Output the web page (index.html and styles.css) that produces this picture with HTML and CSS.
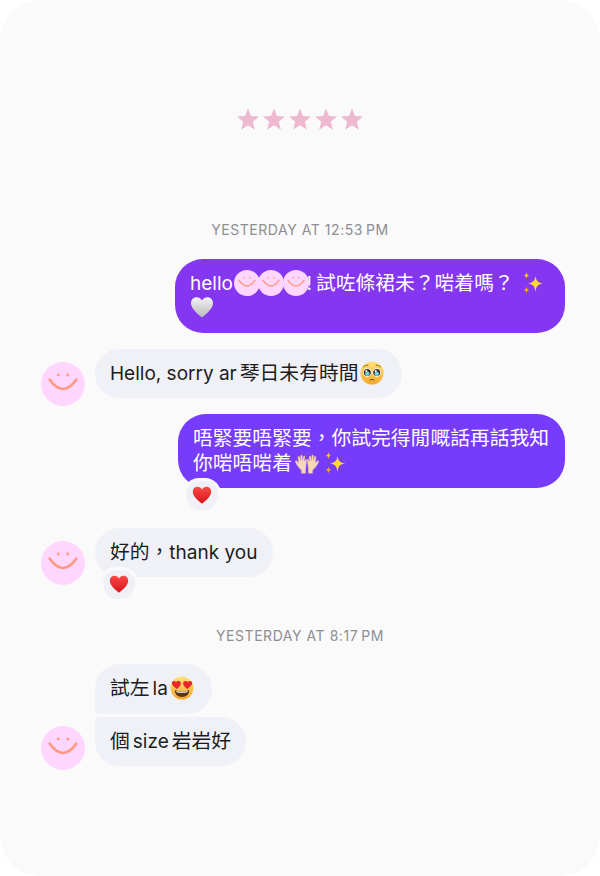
FILE: index.html
```html
<!DOCTYPE html>
<html lang="zh-Hant">
<head>
<meta charset="utf-8">
<title>Chat</title>
<link rel="stylesheet" href="styles.css">
</head>
<body>
<svg class="defs" width="0" height="0" aria-hidden="true">
  <defs>
    <linearGradient id="gw" x1="0" y1="0" x2="0" y2="1"><stop offset="0" stop-color="#f4f4f4"/><stop offset="1" stop-color="#b9b9b9"/></linearGradient>
    <linearGradient id="gr" x1="0" y1="0" x2="0" y2="1"><stop offset="0" stop-color="#fb4a45"/><stop offset="1" stop-color="#d4141c"/></linearGradient>
    <linearGradient id="gy" x1="0" y1="0" x2="0" y2="1"><stop offset="0" stop-color="#fde27a"/><stop offset="1" stop-color="#f5a92c"/></linearGradient>
    <symbol id="smile" viewBox="0 0 44 44">
      <circle cx="22" cy="22" r="22" fill="#ffd6ff"/>
      <circle cx="17.3" cy="13" r="1.4" fill="#ff9a7e"/>
      <circle cx="26.7" cy="13" r="1.4" fill="#ff9a7e"/>
      <path d="M8.6 17.6Q22 36.5 35.4 17.6" fill="none" stroke="#ff9a7e" stroke-width="2.6" stroke-linecap="round"/>
    </symbol>
    <symbol id="star" viewBox="0 0 24 24">
      <path d="M12 1.500l3 7.600 7.900.5-6.100 5.100 2 8-6.800-4.400-6.800 4.400 2-8-6.100-5.100 7.900-.5z" fill="#edb8d0"/>
    </symbol>
    <symbol id="spark" viewBox="0 0 24 24">
      <path d="M14.500 5C15.400 10.200 16.800 11.600 22.500 12.500 16.800 13.400 15.400 14.800 14.500 21 13.600 14.800 12.200 13.400 6.500 12.500 12.200 11.600 13.600 10.200 14.500 5Z" fill="#fdd835"/>
      <path d="M5.500 1C5.900 3.600 6.400 4.100 8.700 4.500 6.400 4.900 5.900 5.400 5.500 8 5.100 5.400 4.600 4.900 2.300 4.500 4.600 4.100 5.100 3.600 5.500 1Z" fill="#fbc02d"/>
      <path d="M5.500 15.500C5.900 18 6.400 18.500 8.700 18.900 6.400 19.300 5.900 19.800 5.500 22.500 5.100 19.800 4.600 19.300 2.300 18.900 4.600 18.500 5.100 18 5.500 15.500Z" fill="#f9a825"/>
    </symbol>
    <symbol id="heart" viewBox="0 0 24 24">
      <path d="M12 22.500C5 16.800 1 12.700 1 8 1 4.600 3.500 2.200 6.600 2.200 8.900 2.200 10.900 3.400 12 5.600 13.100 3.400 15.100 2.200 17.400 2.200 20.500 2.200 23 4.600 23 8 23 12.700 19 16.800 12 22.500Z"/>
    </symbol>
    <symbol id="plead" viewBox="0 0 24 24">
      <circle cx="12" cy="12" r="11.500" fill="url(#gy)"/>
      <circle cx="7.300" cy="11.500" r="4.300" fill="#fff"/><circle cx="16.700" cy="11.500" r="4.300" fill="#fff"/>
      <circle cx="7.300" cy="11.500" r="3.500" fill="#3b2a20"/><circle cx="16.700" cy="11.500" r="3.500" fill="#3b2a20"/>
      <circle cx="7.300" cy="12.800" r="2.200" fill="#6fd0e8"/><circle cx="16.700" cy="12.800" r="2.200" fill="#6fd0e8"/>
      <circle cx="6.300" cy="10" r="1.100" fill="#fff"/><circle cx="15.700" cy="10" r="1.100" fill="#fff"/>
      <path d="M3.500 5.800Q5.500 3.800 8 4.100M20.500 5.800Q18.500 3.800 16 4.100" fill="none" stroke="#8a5a1e" stroke-width=".9" stroke-linecap="round"/>
      <path d="M9.800 19Q12 17.400 14.200 19" fill="none" stroke="#7a4a18" stroke-width="1" stroke-linecap="round"/>
    </symbol>
    <symbol id="hearteyes" viewBox="0 0 24 24">
      <circle cx="12" cy="12" r="11.500" fill="url(#gy)"/>
      <path d="M4.700 14.200Q12 16.200 19.300 14.200 19 20.800 12 20.900 5 20.800 4.700 14.200Z" fill="#5b3416"/>
      <path d="M6.300 14.900Q12 16.200 17.700 14.900L17.400 16.200Q12 17.300 6.600 16.200Z" fill="#fff"/>
      <path d="M6.700 13C3.700 10.800 1.600 9 1.900 6.800 2.200 5 4.500 4.400 6 6 7.700 4.500 10.400 4.800 10.900 6.900 11.300 9 9.300 11 6.700 13Z" fill="#e8262c"/>
      <path d="M17.300 13C20.300 10.800 22.400 9 22.100 6.800 21.800 5 19.500 4.400 18 6 16.300 4.500 13.600 4.800 13.100 6.900 12.700 9 14.700 11 17.300 13Z" fill="#e8262c"/>
    </symbol>
    <symbol id="hands" viewBox="0 0 30 24">
      <g fill="#f6d9bd" stroke="#e0b48e" stroke-width=".5">
        <path d="M9 23V19.500C6.500 18 4 14 2.500 11 2 9.800 3.500 9 4.300 10L6 12.300 5.400 5.600C5.300 4.500 6.900 4.300 7.100 5.400L8 9.800 8.200 4.300C8.200 3.200 9.900 3.200 9.900 4.300L10.100 9.800 11.200 5.100C11.500 4 13 4.400 12.800 5.500L12 10.500 13.600 8.300C14.300 7.600 15 8.300 14.700 9.300 14 12.500 13.800 16 13.500 19.500V23Z"/>
        <path d="M21 23V19.500C23.500 18 26 14 27.500 11 28 9.800 26.500 9 25.700 10L24 12.300 24.600 5.600C24.700 4.500 23.100 4.300 22.900 5.400L22 9.800 21.800 4.300C21.800 3.200 20.100 3.200 20.100 4.300L19.900 9.800 18.800 5.100C18.500 4 17 4.400 17.200 5.500L18 10.500 16.400 8.300C15.700 7.600 15 8.300 15.300 9.300 16 12.500 16.200 16 16.500 19.500V23Z"/>
      </g>
      <path d="M10 2.200V.600M13.500 2.500L14 1M17 2.500L16.500 1M20.500 2.200V.600" stroke="#8f7fb0" stroke-width=".8" fill="none"/>
    </symbol>
  </defs>
</svg>

<main class="card">
  <div class="stars">
    <svg class="star"><use href="#star"/></svg>
    <svg class="star"><use href="#star"/></svg>
    <svg class="star"><use href="#star"/></svg>
    <svg class="star"><use href="#star"/></svg>
    <svg class="star"><use href="#star"/></svg>
  </div>

  <p class="time time-first">YESTERDAY AT 12:53&#8201;PM</p>

  <div class="row out">
    <div class="bubble sent sent-a">hello<svg class="mini mini-first"><use href="#smile"/></svg><svg class="mini"><use href="#smile"/></svg><svg class="mini"><use href="#smile"/></svg><span class="bang">!</span><span class="zh zh-after-bang">試咗條裙未？啱着嗎？</span><svg class="emoji spark-a"><use href="#spark"/></svg><br><svg class="emoji heart-w"><use href="#heart"/></svg></div>
  </div>

  <div class="row in gap-a">
    <svg class="avatar"><use href="#smile"/></svg>
    <div class="bubble recv">Hello, sorry ar<span class="zh zh-tight">琴日未有時間</span><svg class="emoji plead"><use href="#plead"/></svg></div>
  </div>

  <div class="row out gap-a">
    <div class="holder">
      <div class="bubble sent sent-b"><span class="zh">唔緊要唔緊要，你試完得閒嘅話再話我知</span><br><span class="zh">你啱唔啱着</span><svg class="emoji hands"><use href="#hands"/></svg><svg class="emoji spark-b"><use href="#spark"/></svg></div>
      <div class="react react-out"><svg class="heart-r"><use href="#heart"/></svg></div>
    </div>
  </div>

  <div class="row in gap-b">
    <svg class="avatar"><use href="#smile"/></svg>
    <div class="holder">
      <div class="bubble recv thanks"><span class="zh">好的，</span>thank you</div>
      <div class="react react-in"><svg class="heart-r"><use href="#heart"/></svg></div>
    </div>
  </div>

  <p class="time time-second">YESTERDAY AT 8:17&#8201;PM</p>

  <div class="row in no-avatar">
    <div class="bubble recv top-of-group"><span class="zh">試左</span><span class="latin-gap">la</span><svg class="emoji eyes"><use href="#hearteyes"/></svg></div>
  </div>
  <div class="row in last-row">
    <svg class="avatar avatar-last"><use href="#smile"/></svg>
    <div class="bubble recv bottom-of-group"><span class="zh">個</span><span class="latin-gap">size</span><span class="zh zh-tight">岩岩好</span></div>
  </div>
</main>
</body>
</html>
```

FILE: styles.css
```css
* { box-sizing: border-box; }

html, body {
  margin: 0;
  height: 876px;
  overflow: hidden;
  background: #ffffff;
}

.defs { position: absolute; }

.card {
  height: 876px;
  padding: 107px 35px 0;
  background: #fafafa;
  border-radius: 40px;
  font-family: Inter, "Noto Sans CJK TC", sans-serif;
  font-size: 19px;
  line-height: 25px;
  color: #1c1c1e;
}

.stars {
  display: flex;
  justify-content: center;
  gap: 2px;
  height: 24px;
}

.star { width: 24px; height: 24px; }

.time {
  margin: 0;
  text-align: center;
  font-size: 14px;
  line-height: 20px;
  letter-spacing: .55px;
  color: #8e8e93;
}

.time-first { margin-top: 89px; margin-bottom: 19px; }
.time-second { margin-top: 49px; margin-bottom: 18px; }

.row { display: flex; align-items: flex-end; }
.out { justify-content: flex-end; }
.in { gap: 10px; padding-left: 6px; }
.no-avatar { padding-left: 60px; }

.gap-a { margin-top: 16px; }
.gap-b { margin-top: 40px; }
.last-row { margin-top: 3px; }

.avatar {
  flex: none;
  width: 44px;
  height: 44px;
  margin-bottom: -8px;
}

.avatar-last { margin-bottom: -4px; }

.holder { position: relative; }

.bubble {
  padding: 12px 15px;
  white-space: nowrap;
  border-radius: 25px;
}

.thanks { padding-right: 16px; }

.zh {
  font-family: "Noto Sans CJK TC", sans-serif;
  font-size: 19.8px;
  line-height: 20px;
  text-spacing-trim: space-all;
}

.zh-after-bang { margin-left: 4px; }
.zh-tight { margin-left: 3px; }
.latin-gap { margin-left: 3px; }

.sent { color: #ffffff; border-radius: 28px; }
.sent-a { background: #8536f1; width: 390px; }
.sent-b { background: #763bfb; width: 387px; }

.recv { background: #f0f1f6; }

.top-of-group { padding-bottom: 13px; border-bottom-left-radius: 4px; }
.bottom-of-group { border-top-left-radius: 4px; }

.emoji {
  width: 24px;
  height: 24px;
  margin-block: -6px;
  vertical-align: 1px;
}

.mini {
  position: relative;
  width: 26px;
  height: 26px;
  margin-block: -6px;
  margin-right: -1.500px;
  vertical-align: 0;
}

.mini-first { margin-left: 1px; }

.bang { margin-left: -1px; }

.spark-a { margin-left: 7px; }
.heart-w { fill: url(#gw); margin-left: 0; vertical-align: 2px; }
.hands { width: 28px; margin-left: 1px; }
.spark-b { margin-left: 2px; }
.plead { margin-left: 2px; margin-right: 3px; }
.eyes { margin-left: 2px; margin-right: 3px; }

.react {
  position: absolute;
  display: flex;
  align-items: center;
  justify-content: center;
  width: 38px;
  height: 32px;
  padding-bottom: 2px;
  background: #f0f1f6;
  border: 3px solid #fafafa;
  border-bottom-width: 0;
  border-radius: 18px;
}

.react-out { left: 5px; top: 64px; }
.react-in { left: 5px; top: 39px; }

.heart-r {
  width: 20px;
  height: 20px;
  fill: url(#gr);
}
```
